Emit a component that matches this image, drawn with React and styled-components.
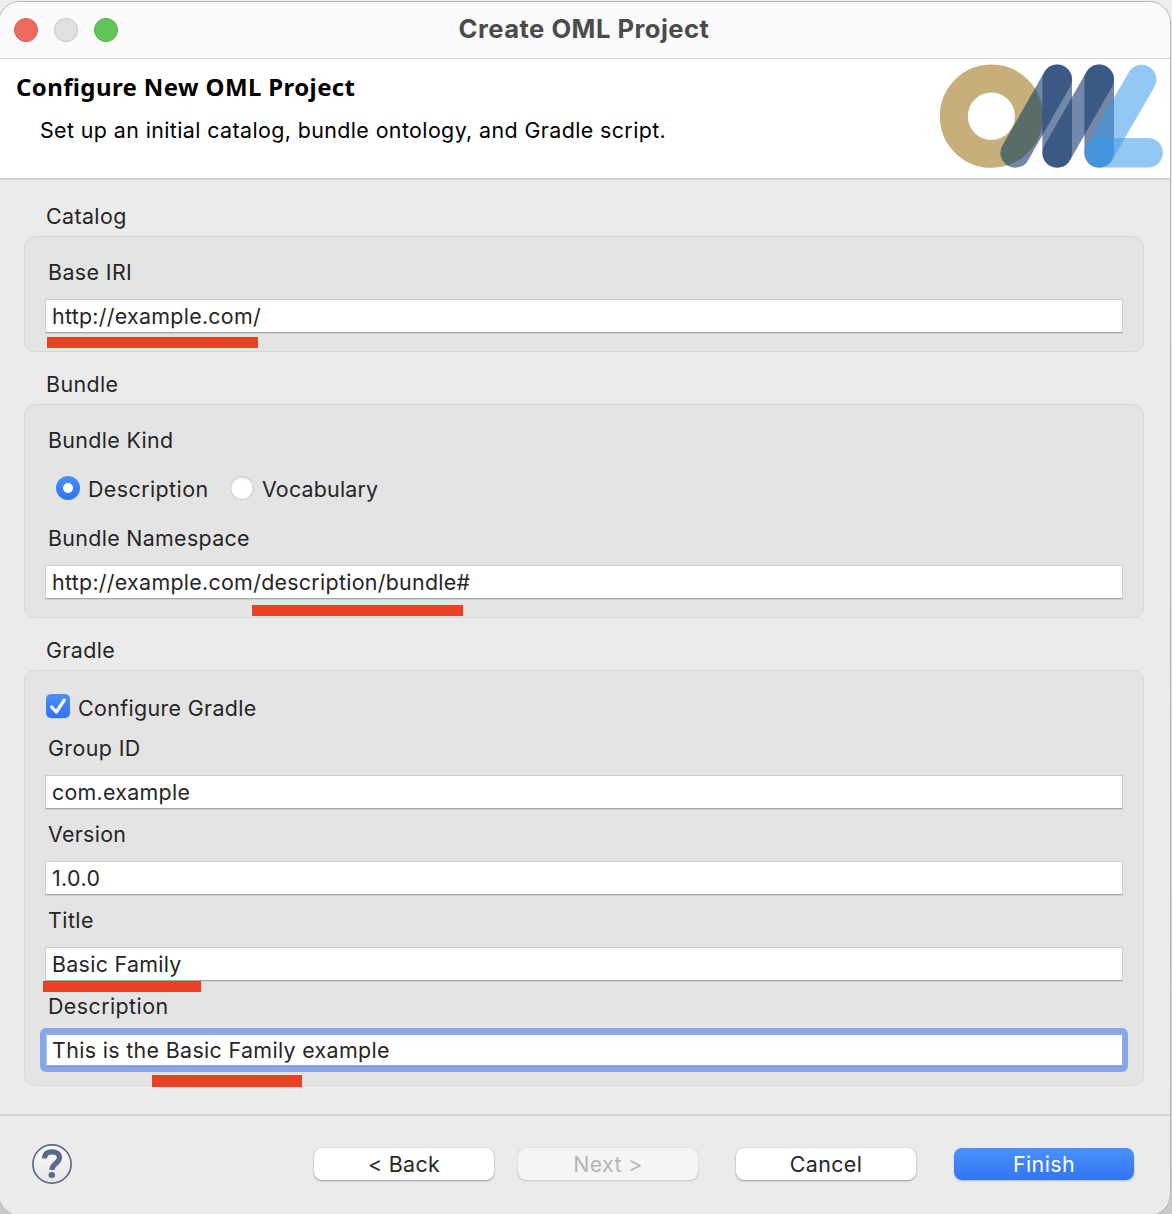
import React from "react";
import styled, { createGlobalStyle, css } from "styled-components";

const GlobalStyle = createGlobalStyle`
  * { box-sizing: border-box; }
  body {
    margin: 0;
    overflow: hidden;
    background: linear-gradient(#ededed, #e4e4e4 40%, #c9c9c9);
    font-family: Inter, "Liberation Sans", sans-serif;
    font-size: 21.4px;
    color: #262626;
  }
`;

const Desktop = styled.div`
  height: 1214px;
  overflow: hidden;
  padding-top: 1px;
`;

const Window = styled.main`
  width: 1173px;
  height: 1215px;
  margin-left: -2px;
  display: flex;
  flex-direction: column;
  overflow: hidden;
  background: #ebebeb;
  border: 1px solid #b5b5b5;
  border-radius: 22px;
`;

const Text = styled.span`
  white-space: pre;
  letter-spacing: ${(p) => p.$track ?? 0.4}px;
`;

const TitleBar = styled.header`
  height: 57px;
  flex: none;
  display: grid;
  grid-template-columns: 120px 1fr 120px;
  align-items: center;
  padding: 0 3px 3px 15px;
  background: #fafafc;
  border-bottom: 1px solid #d6d6d7;
`;

const Lights = styled.div`
  display: flex;
  gap: 16px;
  padding-top: 3px;
`;

const Light = styled.span`
  width: 24px;
  height: 24px;
  border-radius: 50%;
  background: ${(p) => p.$fill};
  border: 1px solid ${(p) => p.$edge};
`;

const WindowTitle = styled.h1`
  margin: 0;
  text-align: center;
  font-size: 25.6px;
  line-height: 32px;
  font-weight: 700;
  color: #4b4b4b;
  padding-right: 13px;
`;

const Banner = styled.section`
  height: 121px;
  flex: none;
  display: flex;
  justify-content: space-between;
  background: #fff;
  border-bottom: 2px solid #d3d3d3;
`;

const BannerText = styled.div`
  padding: 13px 0 0 17px;
  color: #000;
`;

const Heading = styled.h2`
  margin: 0;
  font: 700 24px/30px "Noto Sans", "Open Sans", sans-serif;
`;

const Subheading = styled.p`
  margin: 15px 0 0 24px;
  line-height: 26px;
`;

const Logo = styled.svg`
  width: 232px;
  height: 119px;
  flex: none;
`;

const Form = styled.section`
  height: 934px;
  flex: none;
  padding: 23px 26px 0 25px;
`;

const GroupTitle = styled.h3`
  margin: 0 0 7px 22px;
  font-size: inherit;
  font-weight: 400;
  line-height: 26px;
`;

const GroupBox = styled.div`
  display: flex;
  flex-direction: column;
  margin-bottom: 19px;
  padding: 22px 20px 18px;
  background: #e4e4e4;
  border: 1px solid #d9d9d9;
  border-radius: 10px;
`;

const Label = styled.div`
  line-height: 26px;
  margin: 0 0 14px 3px;
`;

const Field = styled.div`
  position: relative;
  & + & { margin-top: 12px; }
`;

const Value = styled.div`
  height: 34px;
  padding: 0 0 0 6px;
  line-height: 32px;
  background: #fff;
  border: 1px solid #cfcfcf;
  border-bottom: 1px solid #a6a6a6;
  box-shadow: 0 1px 0 #d2d2d2;
  ${(p) =>
    p.$focused &&
    css`
      border-color: #8fadef;
      border-bottom-color: #6f8fd6;
      border-radius: 2px;
      box-shadow: inset 0 1px 0 #8fadef, inset 1px 0 0 #a9c1f4, inset 0 -1px 0 #8fadef,
        0 0 0 5px #89a6e8;
    `}
`;

const Marker = styled.span`
  position: absolute;
  left: ${(p) => p.$x}px;
  bottom: ${(p) => -p.$drop}px;
  width: ${(p) => p.$w}px;
  height: ${(p) => p.$h ?? 11}px;
  background: #ea4025;
`;

const RadioRow = styled.div`
  display: flex;
  align-items: center;
  height: 24px;
  margin: 9px 0 25px 11px;
`;

const Choice = styled.label`
  display: flex;
  align-items: center;
  height: 24px;
  width: ${(p) => p.$w}px;
  gap: 8px;
  line-height: 26px;
  ${Text} { padding-top: 2px; }
`;

const Radio = styled.span`
  width: 24px;
  height: 24px;
  flex: none;
  display: grid;
  place-items: center;
  border-radius: 50%;
  ${(p) =>
    p.$on
      ? css`
          background: linear-gradient(#4a90f8, #3072f6);
          &::after {
            content: "";
            width: 10px;
            height: 10px;
            border-radius: 50%;
            background: #fff;
          }
        `
      : css`
          background: #fff;
          border: 1px solid #c9c9c9;
          box-shadow: inset 0 1px 2px #dedede;
        `}
`;

const CheckRow = styled(Choice)`
  margin: 1px 0 17px 1px;
  ${Text} { padding-top: 4px; }
`;

const CheckBox = styled.span`
  width: 24px;
  height: 24px;
  flex: none;
  border-radius: 5px;
  background: linear-gradient(#4a90f8, #3072f6);
  box-shadow: 0 1px 1px #c4cfe6;
  svg { display: block; }
`;

const Footer = styled.footer`
  flex: 1;
  display: flex;
  align-items: flex-start;
  padding: 32px 36px 0 33px;
  border-top: 2px solid #d3d3d3;
`;

const HelpIcon = styled.svg`
  width: 40px;
  height: 40px;
  margin: -4px auto 0 0;
`;

const Button = styled.button`
  width: 180px;
  height: 32px;
  margin-left: ${(p) => p.$gap ?? 0}px;
  padding: 0;
  border: 0;
  border-radius: 8px;
  font: inherit;
  line-height: 32px;
  color: #262626;
  background: #fff;
  box-shadow: 0 0 1px rgba(0, 0, 0, 0.3), 0 1px 2px rgba(0, 0, 0, 0.32);
  ${(p) =>
    p.$kind === "disabled" &&
    css`
      color: #b5b5b5;
      background: #f5f5f5;
      box-shadow: 0 0 1px rgba(0, 0, 0, 0.25), 0 1px 2px rgba(0, 0, 0, 0.12);
    `}
  ${(p) =>
    p.$kind === "primary" &&
    css`
      color: #fff;
      background: linear-gradient(#4a91f8, #3275f6);
      box-shadow: 0 1px 2px rgba(50, 100, 220, 0.35);
    `}
`;

function OmlLogo() {
  return (
    <Logo viewBox="938 59 232 119" fill="none" strokeWidth="29.6" strokeLinecap="round">
      <defs>
        <clipPath id="ring">
          <path
            clipRule="evenodd"
            d="M939.8 116.2a51.6 51.6 0 1 0 103.2 0a51.6 51.6 0 1 0 -103.2 0ZM967.8 116.2a23.6 23.6 0 1 0 47.2 0a23.6 23.6 0 1 0 -47.2 0Z"
          />
        </clipPath>
      </defs>
      <circle cx="991.4" cy="116.2" r="37.6" stroke="#c7af7c" strokeWidth="28" />
      <g stroke="#183b70" strokeOpacity="0.607">
        <path d="M1015.3 152.8 1057.2 79.4" />
        <path d="M1057.2 79.4V152.8" />
        <path d="M1057.2 152.8 1099.2 79.4" />
        <path d="M1099.2 79.4V152.8" />
      </g>
      <g clipPath="url(#ring)">
        <path d="M1015.3 152.8 1057.2 79.4" stroke="#44783e" strokeOpacity="0.2" />
      </g>
      <g stroke="#3a9aeb" strokeOpacity="0.54">
        <path d="M1099.2 152.8 1141.6 79.6" />
        <path d="M1099.2 152.8H1148" />
      </g>
    </Logo>
  );
}

function TextField({ label, value, labelTrack, track, focused, marker }) {
  return (
    <Field>
      <Label>
        <Text $track={labelTrack}>{label}</Text>
      </Label>
      <Value $focused={focused}>
        <Text $track={track}>{value}</Text>
      </Value>
      {marker && <Marker $x={marker.x} $w={marker.w} $drop={marker.drop} $h={marker.h} />}
    </Field>
  );
}

export default function App() {
  return (
    <Desktop>
      <GlobalStyle />
      <Window>
        <TitleBar>
          <Lights>
            <Light $fill="#ec6a5e" $edge="#dc5a4e" />
            <Light $fill="#e0e0e2" $edge="#c4c4c6" />
            <Light $fill="#61c454" $edge="#52b144" />
          </Lights>
          <WindowTitle>
            <Text $track={0.48}>Create OML Project</Text>
          </WindowTitle>
        </TitleBar>

        <Banner>
          <BannerText>
            <Heading>
              <Text $track={0.38}>Configure New OML Project</Text>
            </Heading>
            <Subheading>
              <Text $track={0.4}>
                Set up an initial catalog, bundle ontology, and Gradle script.
              </Text>
            </Subheading>
          </BannerText>
          <OmlLogo />
        </Banner>

        <Form>
          <GroupTitle><Text $track={0.4}>Catalog</Text></GroupTitle>
          <GroupBox>
            <TextField
              label="Base IRI"
              labelTrack={0.4}
              value="http://example.com/"
              track={0.28}
              marker={{ x: 2, w: 211, drop: 15 }}
            />
          </GroupBox>

          <GroupTitle><Text $track={0.4}>Bundle</Text></GroupTitle>
          <GroupBox>
            <Label><Text $track={0.35}>Bundle Kind</Text></Label>
            <RadioRow>
              <Choice $w={174}>
                <Radio $on />
                <Text $track={0.43}>Description</Text>
              </Choice>
              <Choice>
                <Radio />
                <Text $track={0.2}>Vocabulary</Text>
              </Choice>
            </RadioRow>
            <TextField
              label="Bundle Namespace"
              labelTrack={0.32}
              value="http://example.com/description/bundle#"
              track={0.29}
              marker={{ x: 207, w: 211, drop: 17 }}
            />
          </GroupBox>

          <GroupTitle><Text $track={0.4}>Gradle</Text></GroupTitle>
          <GroupBox>
            <CheckRow>
              <CheckBox>
                <svg width="24" height="24" viewBox="0 0 24 24" fill="none">
                  <path
                    d="M5.7 13 10.3 18 18.3 6.2"
                    stroke="#fff"
                    strokeWidth="3.2"
                    strokeLinecap="round"
                    strokeLinejoin="round"
                  />
                </svg>
              </CheckBox>
              <Text $track={0.36}>Configure Gradle</Text>
            </CheckRow>
            <TextField label="Group ID" labelTrack={0.4} value="com.example" track={0.28} />
            <TextField label="Version" labelTrack={0.3} value="1.0.0" track={0.4} />
            <TextField
              label="Title"
              labelTrack={0.46}
              value="Basic Family"
              track={0.3}
              marker={{ x: -2, w: 158, drop: 11 }}
            />
            <TextField
              label="Description"
              labelTrack={0.43}
              value="This is the Basic Family example"
              track={0.345}
              focused
              marker={{ x: 107, w: 150, drop: 20, h: 12 }}
            />
          </GroupBox>
        </Form>

        <Footer>
          <HelpIcon viewBox="0 0 40 40" fill="none">
            <defs>
              <linearGradient id="helpFill" x1="0" y1="0" x2="0" y2="1">
                <stop offset="0" stopColor="#fbfbfb" />
                <stop offset="1" stopColor="#e6e6e6" />
              </linearGradient>
            </defs>
            <circle cx="20" cy="20" r="19.1" fill="url(#helpFill)" stroke="#596a8c" strokeWidth="1.7" />
            <path
              d="M12.4 14.4C12.6 9.8 15.6 7.9 20.1 7.9c4.6 0 7.3 2.1 7.3 5.7 0 3-1.7 4.5-3.9 6.2-2.1 1.6-3.5 2.7-3.5 6.1"
              stroke="#596a8c"
              strokeWidth="5.2"
            />
            <ellipse cx="19.8" cy="31" rx="3.3" ry="2.9" fill="#596a8c" />
          </HelpIcon>
          <Button><Text $track={0.3}>{"< Back"}</Text></Button>
          <Button $kind="disabled" $gap={24}><Text $track={0.36}>{"Next >"}</Text></Button>
          <Button $gap={38}><Text $track={0.4}>Cancel</Text></Button>
          <Button $kind="primary" $gap={38}><Text $track={0.4}>Finish</Text></Button>
        </Footer>
      </Window>
    </Desktop>
  );
}
